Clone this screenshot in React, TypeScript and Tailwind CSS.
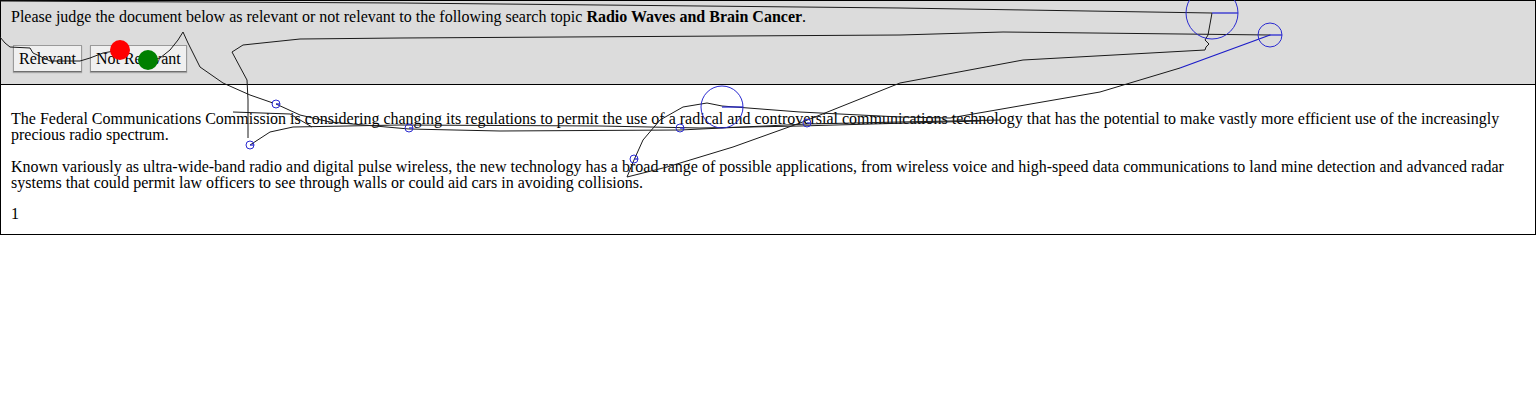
const trails: string[] = [
  // top sweep across the header
  "M0,1 L400,3 L900,8 L1212,13",
  // squiggle down from the big circle and back across to the second paragraph
  "M1212,13 L1208,35 L1205,40 L1209,44 L1206,47 L1205,50 L1023,60 L900,83 L800,123 L733,147 L667,167 L627,177",
  // up through the first paragraph and out to the right
  "M627,177 L634,160 L643,140 L660,120 L683,107 L707,103 L722,106 L800,112 L900,117 L950,118 L1100,92 L1180,68",
  // back across the header and down to the lower-left circle
  "M1270,35 L1003,32 L900,35 L400,38 L300,39 L243,45 L232,52 L240,67 L247,80 L248,100 L248,138",
  // strikes along the first line
  "M250,145 L270,132 L293,127 L400,125 L600,126 L700,128 L800,126 L980,121",
  "M276,104 L300,115 L330,122 L409,129 L500,131 L680,130 L807,124 L900,122 L1000,120",
  "M233,112 L290,114 L312,127",
  // start of the trail, over the buttons
  "M0,37 L5,43 L10,47 L30,48 L33,53 L50,61 L80,61 L90,58 L103,53 L120,50",
  "M148,60 L160,58 L170,50 L178,40 L183,32 L188,43 L200,67 L223,83 L250,95 L273,103",
];

const rings = [
  { x: 276, y: 104, r: 4 },
  { x: 250, y: 145, r: 4 },
  { x: 409, y: 128, r: 4 },
  { x: 680, y: 128, r: 4 },
  { x: 807, y: 123, r: 4 },
  { x: 634, y: 159, r: 4 },
  { x: 722, y: 107, r: 21 },
  { x: 1212, y: 13, r: 26 },
  { x: 1270, y: 35, r: 12 },
];

function TrailOverlay() {
  return (
    <svg
      className="absolute left-0 top-0 pointer-events-none"
      width={1536}
      height={400}
      viewBox="0 0 1536 400"
    >
      {trails.map((d, i) => (
        <path key={i} d={d} fill="none" stroke="#1a1a1a" strokeWidth={1} />
      ))}
      <path d="M1180,68 L1270,35" fill="none" stroke="#1c1cc8" strokeWidth={1.3} />
      {rings.map((c, i) => (
        <g key={i}>
          <circle cx={c.x} cy={c.y} r={c.r} fill="none" stroke="#2a2ad0" strokeWidth={1} />
          <line x1={c.x} y1={c.y} x2={c.x + c.r} y2={c.y} stroke="#2a2ad0" strokeWidth={1.3} />
        </g>
      ))}
      <circle cx={120} cy={50} r={10} fill="#ff0000" />
      <circle cx={148} cy={60} r={10} fill="#008000" />
    </svg>
  );
}

function JudgeButton({ label }: { label: string }) {
  return (
    <button className="h-[27px] px-[5px] bg-[#f0f0f0] border border-[#9a9a9a] border-b-[#6f6f6f] shadow-[0_1px_1px_rgba(0,0,0,0.25)] leading-[16px]">
      {label}
    </button>
  );
}

export default function App() {
  return (
    <div className="relative w-[1536px] h-[400px] bg-white font-['Liberation_Serif','Times_New_Roman',serif] text-[16px] leading-[16px] text-black">
      <div className="border border-black">
        <div className="bg-[#dcdcdc] border-b border-black px-[10px] pt-[8px] pb-[12px]">
          <p>
            Please judge the document below as relevant or not relevant to the following search topic{" "}
            <b>Radio Waves and Brain Cancer</b>.
          </p>
          <div className="mt-[20px] ml-[2px] flex gap-[8px]">
            <JudgeButton label="Relevant" />
            <JudgeButton label="Not Relevant" />
          </div>
        </div>

        <div className="px-[10px] pt-[26px] pb-[12px]">
          <p>
            The Federal Communications Commission is considering changing its regulations to permit the use of a
            radical and controversial communications technology that has the potential to make vastly more
            efficient use of the increasingly precious radio spectrum.
          </p>
          <p className="mt-[16px]">
            Known variously as ultra-wide-band radio and digital pulse wireless, the new technology has a broad
            range of possible applications, from wireless voice and high-speed data communications to land mine
            detection and advanced radar systems that could permit law officers to see through walls or could aid
            cars in avoiding collisions.
          </p>
          <p className="mt-[15px]">1</p>
        </div>
      </div>

      <TrailOverlay />
    </div>
  );
}
